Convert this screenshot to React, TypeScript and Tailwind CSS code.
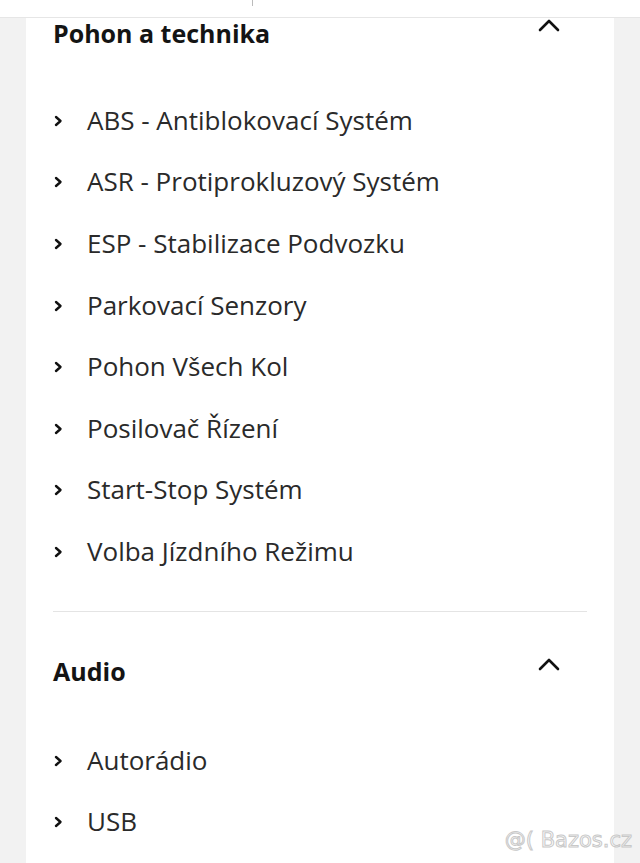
import React from "react";

const ChevronUp = () => (
  <svg width="22" height="14" viewBox="0 0 22 14" fill="none">
    <path d="M2 12 L11 3 L20 12" stroke="#111" strokeWidth="2.6" strokeLinecap="round" strokeLinejoin="round" />
  </svg>
);

const ChevronRight = () => (
  <svg width="10" height="12" viewBox="0 0 10 12" fill="none">
    <path d="M3 2 L7.5 6 L3 10" stroke="#111" strokeWidth="2.4" strokeLinecap="round" strokeLinejoin="round" />
  </svg>
);

const Item = ({ label }: { label: string }) => (
  <div className="flex h-[61.6px] items-center">
    <div className="flex w-[34px] items-center pt-[2px]">
      <ChevronRight />
    </div>
    <span className="text-[26px] leading-none text-[#2a2a2a]">{label}</span>
  </div>
);

const Header = ({ title }: { title: string }) => (
  <div className="flex h-[30px] items-center justify-between">
    <span className="text-[25px] font-bold leading-none text-[#141414]">{title}</span>
    <div className="mr-[27px] -translate-y-[8px]">
      <ChevronUp />
    </div>
  </div>
);

export default function App() {
  const drive = [
    "ABS - Antiblokovací Systém",
    "ASR - Protiprokluzový Systém",
    "ESP - Stabilizace Podvozku",
    "Parkovací Senzory",
    "Pohon Všech Kol",
    "Posilovač Řízení",
    "Start-Stop Systém",
    "Volba Jízdního Režimu",
  ];
  const audio = ["Autorádio", "USB"];
  return (
    <div className="relative h-[863px] w-[640px] overflow-hidden bg-[#f2f2f2] font-['Open_Sans',sans-serif]">
      <div className="relative h-[18px] border-b border-[#e6e6e6] bg-white">
        <div className="absolute left-[252px] top-0 h-[6px] w-px bg-[#bbb]" />
      </div>
      <div className="mx-[26px] h-[845px] bg-white px-[27px]">
        <Header title="Pohon a technika" />
        <div className="mt-[41px]">
          {drive.map((d) => (
            <Item key={d} label={d} />
          ))}
        </div>
        <div className="mt-[29px] h-px bg-[#e4e4e4]" />
        <div className="mt-[45px]">
          <Header title="Audio" />
        </div>
        <div className="mt-[42px]">
          {audio.map((d) => (
            <Item key={d} label={d} />
          ))}
        </div>
      </div>
      <div className="absolute bottom-[12px] right-[8px] font-['DejaVu_Sans',sans-serif] text-[21px] leading-none text-transparent [-webkit-text-stroke:1px_#c8c8c8]">
        @( Bazos.cz
      </div>
    </div>
  );
}
